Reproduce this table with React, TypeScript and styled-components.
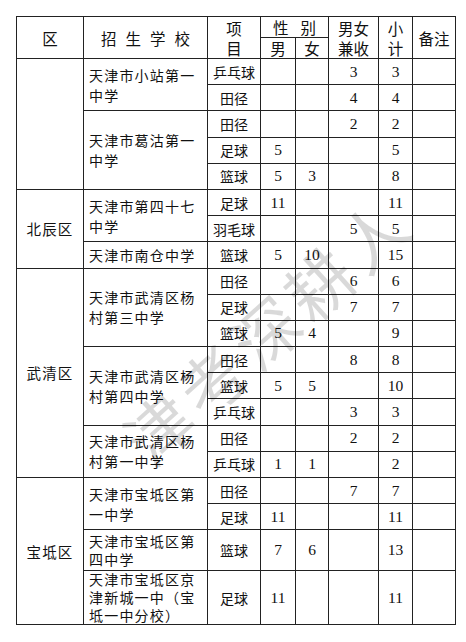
import React from "react";
import styled, { createGlobalStyle } from "styled-components";

const Global = createGlobalStyle`
  html, body { margin: 0; padding: 0; background: #fff; }
  body { font-family: "Noto Sans CJK SC", "Liberation Serif", serif; color: #111; }
`;

const Page = styled.div`
  padding: 16px 11px 0 16px;
`;

const Frame = styled.div`
  position: relative;
  width: 439px;
`;

const Table = styled.table`
  border-collapse: collapse;
  table-layout: fixed;
  width: 439px;
  border: 1.5px solid #222;
`;

const Col = styled.col<{ $w: number }>`
  width: ${(p) => p.$w}px;
`;

const HeadCell = styled.th<{ $spacing?: number }>`
  border: 1px solid #222;
  padding: 0;
  height: 20px;
  font-family: "Noto Sans CJK SC", sans-serif;
  font-weight: 400;
  font-size: 15.5px;
  line-height: 20px;
  text-align: center;
  vertical-align: middle;
  white-space: nowrap;
  letter-spacing: ${(p) => p.$spacing ?? 0}px;
  padding-left: ${(p) => p.$spacing ?? 0}px;
`;

const Row = styled.tr<{ $h: number }>`
  height: ${(p) => p.$h}px;
`;

const DistrictCell = styled.td`
  border: 1px solid #222;
  padding: 0;
  font-size: 14.5px;
  letter-spacing: 1.2px;
  text-align: center;
  vertical-align: middle;
`;

const SchoolCell = styled.td<{ $lh: number }>`
  border: 1px solid #222;
  padding: 0 0 0 5px;
  font-size: 14px;
  letter-spacing: 1.2px;
  line-height: ${(p) => p.$lh}px;
  text-align: left;
  vertical-align: middle;
  white-space: nowrap;
`;

const SportCell = styled.td`
  border: 1px solid #222;
  padding: 0;
  font-size: 14px;
  text-align: center;
  vertical-align: middle;
  white-space: nowrap;
`;

const NumCell = styled.td`
  border: 1px solid #222;
  padding: 0;
  font-family: "Liberation Serif", serif;
  font-size: 15.5px;
  text-align: center;
  vertical-align: middle;
`;

const Watermark = styled.div`
  position: absolute;
  left: 40px;
  top: 276px;
  width: 420px;
  text-align: center;
  transform: rotate(-42deg);
  transform-origin: center center;
  font-family: "Noto Sans CJK SC", sans-serif;
  font-weight: 400;
  font-size: 66px;
  line-height: 72px;
  letter-spacing: 6px;
  color: rgba(0, 0, 0, 0.15);
  pointer-events: none;
  white-space: nowrap;
`;

type R = {
  district?: string;
  dRows?: number;
  school?: string;
  sRows?: number;
  sport: string;
  m?: string;
  f?: string;
  mf?: string;
  t: string;
  h?: number;
  lh?: number;
};

const rows: R[] = [
  { district: "", dRows: 5, school: "天津市小站第一|中学", sRows: 2, sport: "乒乓球", mf: "3", t: "3" },
  { sport: "田径", mf: "4", t: "4" },
  { school: "天津市葛沽第一|中学", sRows: 3, sport: "田径", mf: "2", t: "2" },
  { sport: "足球", m: "5", t: "5" },
  { sport: "篮球", m: "5", f: "3", t: "8" },
  { district: "北辰区", dRows: 3, school: "天津市第四十七|中学", sRows: 2, sport: "足球", m: "11", t: "11" },
  { sport: "羽毛球", mf: "5", t: "5" },
  { school: "天津市南仓中学", sRows: 1, sport: "篮球", m: "5", f: "10", t: "15" },
  { district: "武清区", dRows: 8, school: "天津市武清区杨|村第三中学", sRows: 3, sport: "田径", mf: "6", t: "6" },
  { sport: "足球", mf: "7", t: "7" },
  { sport: "篮球", m: "5", f: "4", t: "9" },
  { school: "天津市武清区杨|村第四中学", sRows: 3, sport: "田径", mf: "8", t: "8" },
  { sport: "篮球", m: "5", f: "5", t: "10" },
  { sport: "乒乓球", mf: "3", t: "3" },
  { school: "天津市武清区杨|村第一中学", sRows: 2, sport: "田径", mf: "2", t: "2" },
  { sport: "乒乓球", m: "1", f: "1", t: "2" },
  { district: "宝坻区", dRows: 4, school: "天津市宝坻区第|一中学", sRows: 2, sport: "田径", mf: "7", t: "7" },
  { sport: "足球", m: "11", t: "11" },
  { school: "天津市宝坻区第|四中学", sRows: 1, sport: "篮球", m: "7", f: "6", t: "13", h: 41, lh: 18 },
  { school: "天津市宝坻区京|津新城一中（宝|坻一中分校）", sRows: 1, sport: "足球", m: "11", t: "11", h: 53, lh: 17.6 },
];

const Lines = ({ text }: { text: string }) => (
  <>
    {text.split("|").map((s, i, arr) => (
      <React.Fragment key={i}>
        {s}
        {i < arr.length - 1 && <br />}
      </React.Fragment>
    ))}
  </>
);

export default function App() {
  return (
    <>
      <Global />
      <Page>
        <Frame>
          <Table>
            <colgroup>
              <Col $w={67} />
              <Col $w={124} />
              <Col $w={53} />
              <Col $w={35} />
              <Col $w={33} />
              <Col $w={50} />
              <Col $w={34} />
              <Col $w={43} />
            </colgroup>
            <thead>
              <tr>
                <HeadCell rowSpan={2}>区</HeadCell>
                <HeadCell rowSpan={2} $spacing={9}>招生学校</HeadCell>
                <HeadCell rowSpan={2}>
                  项<br />目
                </HeadCell>
                <HeadCell colSpan={2} $spacing={12}>性别</HeadCell>
                <HeadCell rowSpan={2}>
                  男女<br />兼收
                </HeadCell>
                <HeadCell rowSpan={2}>
                  小<br />计
                </HeadCell>
                <HeadCell rowSpan={2}>备注</HeadCell>
              </tr>
              <tr>
                <HeadCell>男</HeadCell>
                <HeadCell>女</HeadCell>
              </tr>
            </thead>
            <tbody>
              {rows.map((r, i) => (
                <Row key={i} $h={r.h ?? 26.2}>
                  {r.district !== undefined && <DistrictCell rowSpan={r.dRows}>{r.district}</DistrictCell>}
                  {r.school !== undefined && (
                    <SchoolCell rowSpan={r.sRows} $lh={r.lh ?? 20}>
                      <Lines text={r.school} />
                    </SchoolCell>
                  )}
                  <SportCell>{r.sport}</SportCell>
                  <NumCell>{r.m ?? ""}</NumCell>
                  <NumCell>{r.f ?? ""}</NumCell>
                  <NumCell>{r.mf ?? ""}</NumCell>
                  <NumCell>{r.t}</NumCell>
                  <NumCell />
                </Row>
              ))}
            </tbody>
          </Table>
          <Watermark>津考深耕人</Watermark>
        </Frame>
      </Page>
    </>
  );
}
